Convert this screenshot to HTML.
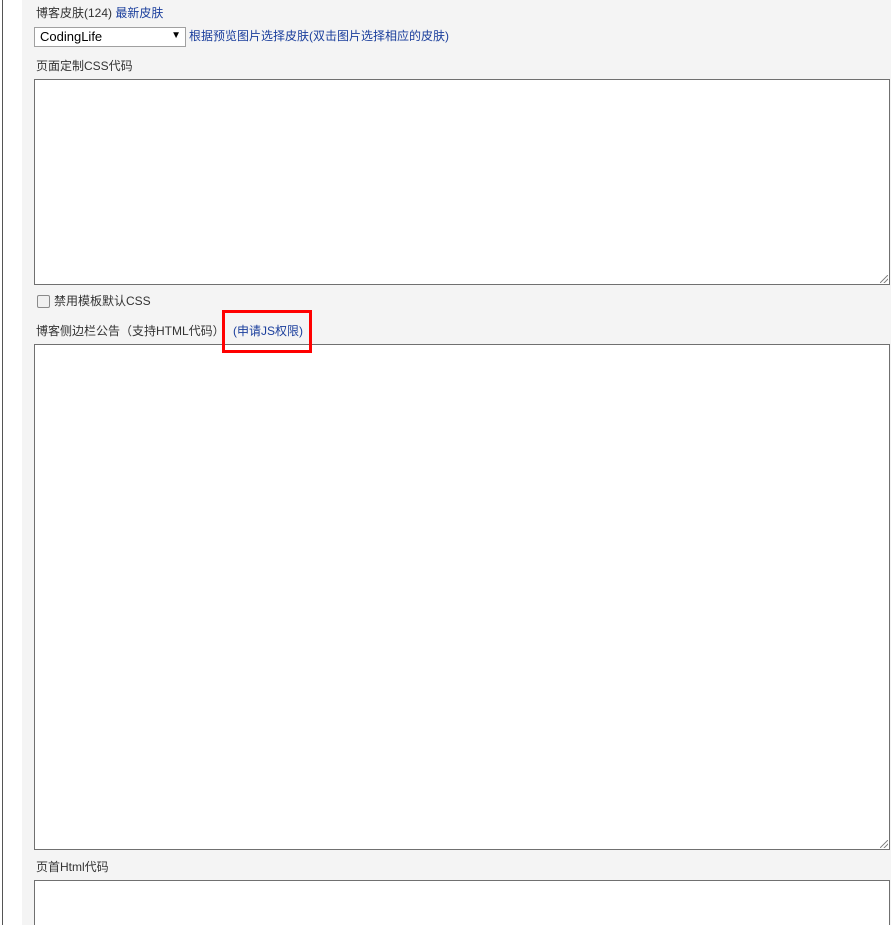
<!DOCTYPE html>
<html style="overflow:hidden;height:925px"><head><meta charset="utf-8"><style>
body{margin:0;width:891px;height:925px;overflow:hidden;background:#fff;position:relative;font-family:"Liberation Sans","Noto Sans CJK SC",sans-serif;font-size:12px;color:#333}
.vl{position:absolute;left:2px;top:0;width:1px;height:925px;background:#555}
.panel{position:absolute;left:22px;top:0;width:869px;height:925px;background:#f4f4f4}
.t{position:absolute;white-space:nowrap;line-height:14px}
a{color:#1a3e9c;text-decoration:none}
.ta{position:absolute;left:34px;width:854px;background:#fff;border:1px solid #707070}
.sel{position:absolute;left:34px;top:27px;width:150px;height:18px;background:#fff;border:1px solid #a0a0a0;font-size:13px;color:#000}
.cb{position:absolute;left:37px;top:295px;width:11px;height:11px;border:1px solid #8a8a8a;border-radius:2px;background:#f0f0f0}
.red{position:absolute;left:222px;top:310px;width:84px;height:37px;border:3px solid #f00;z-index:5}
.grip{position:absolute;width:8px;height:8px;background:linear-gradient(135deg,transparent 45%,#888 46%,#888 54%,transparent 55%,transparent 70%,#888 71%,#888 79%,transparent 80%)}
</style></head><body>
<div class="vl"></div>
<div class="panel"></div>
<div class="t" style="left:36px;top:6px">博客皮肤(124) <a>最新皮肤</a></div>
<div class="sel"><span style="position:absolute;left:5px;top:1px">CodingLife</span><span style="position:absolute;right:4px;top:2px;font-size:10px">▼</span></div>
<div class="t" style="left:189px;top:29px"><a>根据预览图片选择皮肤(双击图片选择相应的皮肤)</a></div>
<div class="t" style="left:36px;top:59px">页面定制CSS代码</div>
<div class="ta" style="top:79px;height:204px"><div class="grip" style="right:1px;bottom:1px"></div></div>
<div class="cb"></div>
<div class="t" style="left:54px;top:294px">禁用模板默认CSS</div>
<div class="t" style="left:36px;top:324px">博客侧边栏公告（支持HTML代码）</div>
<div class="t" style="left:233px;top:324px"><a>(申请JS权限)</a></div>
<div class="red"></div>
<div class="ta" style="top:344px;height:504px"><div class="grip" style="right:1px;bottom:1px"></div></div>
<div class="t" style="left:36px;top:860px">页首Html代码</div>
<div class="ta" style="top:880px;height:44px;border-bottom:none"></div>
</body></html>
